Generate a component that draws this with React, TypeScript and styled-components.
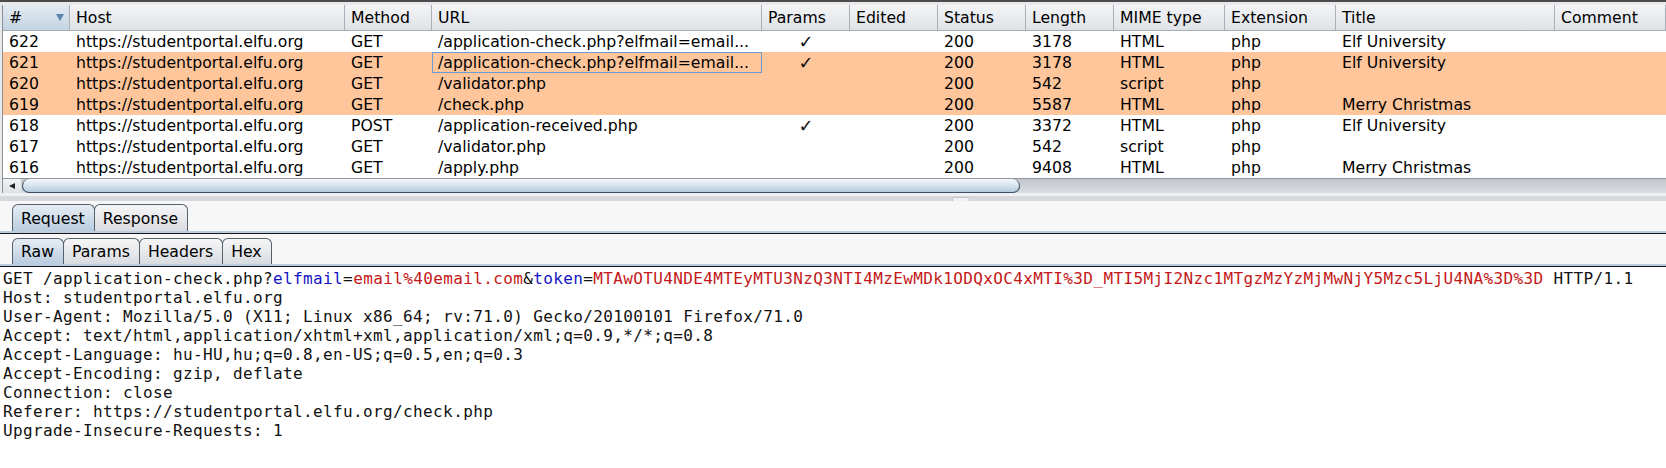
import React from 'react';
import styled, { createGlobalStyle } from 'styled-components';

const Global = createGlobalStyle`
  html, body { margin: 0; padding: 0; background: #f7f7f7; }
  body {
    width: 1666px;
    height: 468px;
    overflow: hidden;
    font-family: "DejaVu Sans", "Liberation Sans", sans-serif;
    color: #000;
  }
`;

const COLS = '67px 275px 87px 330px 88px 88px 88px 88px 111px 111px 219px 111px';

const Page = styled.div`
  display: flex;
  flex-direction: column;
  height: 468px;
  background: #f7f7f7;
`;

const TablePane = styled.div`
  border-top: 2px solid #4b4b4b;
  padding-top: 3px;
  background: #e8e9eb;
`;

const TableFrame = styled.div`
  margin-left: 2px;
  border-left: 1px solid #8c9096;
  background: #fff;
`;

const HeaderRow = styled.div`
  display: grid;
  grid-template-columns: ${COLS};
  height: 26px;
  border-bottom: 1px solid #a6acb3;
  box-sizing: border-box;
`;

const HeaderCell = styled.div<{ $sorted?: boolean }>`
  display: flex;
  align-items: center;
  justify-content: space-between;
  padding: 0 6px;
  font-size: 15.7px;
  border-right: 1px solid #aab0b8;
  background: ${(p) =>
    p.$sorted
      ? 'linear-gradient(#e4ebf2, #c3d3e3)'
      : 'linear-gradient(#f3f4f6, #dfe2e6)'};
  white-space: nowrap;
  overflow: hidden;
`;

const SortArrow = styled.span`
  width: 0;
  height: 0;
  border-left: 4px solid transparent;
  border-right: 4px solid transparent;
  border-top: 7px solid #5d84ad;
  margin-right: -1px;
`;

const Row = styled.div<{ $hl?: boolean }>`
  display: grid;
  grid-template-columns: ${COLS};
  height: 21px;
  background: ${(p) => (p.$hl ? '#ffc59b' : '#ffffff')};
`;

const Cell = styled.div<{ $center?: boolean; $focus?: boolean }>`
  padding: 0 ${(p) => (p.$focus ? '5px' : '6px')};
  font-size: 15.7px;
  line-height: ${(p) => (p.$focus ? '19px' : '21px')};
  white-space: nowrap;
  overflow: hidden;
  text-align: ${(p) => (p.$center ? 'center' : 'left')};
  border: ${(p) => (p.$focus ? '1px solid #6f9bd0' : 'none')};
`;

const Check = styled.span`
  font-size: 18px;
  font-weight: bold;
  color: #111;
`;

const ScrollBar = styled.div`
  display: flex;
  height: 15px;
  background: linear-gradient(#c3c7cd, #d9dce1);
  border-top: 1px solid #8f959c;
  box-sizing: border-box;
`;

const ArrowBtn = styled.div`
  width: 18px;
  display: flex;
  align-items: center;
  justify-content: center;
  background: linear-gradient(#f2f4f6, #dde1e5);
`;

const ArrowLeft = styled.span`
  width: 0;
  height: 0;
  border-top: 3px solid transparent;
  border-bottom: 3px solid transparent;
  border-right: 6px solid #222;
`;

const Thumb = styled.div`
  width: 998px;
  box-sizing: border-box;
  margin-left: 1px;
  border: 1px solid #3c4e62;
  border-top: none;
  border-radius: 8px;
  background: linear-gradient(#f4f7fa, #dbe6f0 45%, #b4c9dd);
`;

const Divider = styled.div`
  height: 10px;
  display: flex;
  flex-direction: column;
`;

const DividerTop = styled.div`
  height: 3px;
  background: #eff0f2;
`;

const DividerBand = styled.div`
  height: 5px;
  background: #d5d9de;
  display: flex;
`;

const Gripper = styled.div`
  margin-left: 952px;
  margin-top: 1px;
  width: 16px;
  height: 3px;
  background: #eef0f2;
  border: 1px solid #c2c7cd;
  border-bottom: none;
  border-radius: 2px 2px 0 0;
`;

const StripWrap = styled.div<{ $top: number }>`
  margin-top: ${(p) => p.$top}px;
  border-bottom: 1px solid #161616;
`;

const TabStrip = styled.div`
  display: flex;
  align-items: flex-end;
  padding-left: 12px;
  border-bottom: 2px solid #bccde0;
`;

const Tab = styled.div<{ $active?: boolean; $h: number }>`
  height: ${(p) => p.$h}px;
  box-sizing: border-box;
  display: flex;
  align-items: center;
  padding: 0 9px 0 8px;
  margin-right: -1px;
  font-size: 15.7px;
  border: 1px solid #56606b;
  border-bottom: none;
  border-radius: 6px 6px 0 0;
  background: ${(p) =>
    p.$active
      ? 'linear-gradient(#e6edf4, #b9cce0)'
      : 'linear-gradient(#f6f6f7, #d8dbe0)'};
`;

const TextArea = styled.div`
  flex: 1;
  background: #fff;
  padding: 2px 3px 0;
  font-family: "DejaVu Sans Mono", "Liberation Mono", monospace;
  font-size: 16px;
  letter-spacing: 0.37px;
  line-height: 19px;
  white-space: pre;
  color: #111;
`;

const Line = styled.div``;

const PName = styled.span`
  color: #1414c4;
`;

const PValue = styled.span`
  color: #c41818;
`;

type RowData = {
  id: string;
  method: string;
  url: string;
  params: boolean;
  length: string;
  mime: string;
  title: string;
  hl?: boolean;
  focus?: boolean;
};

const rows: RowData[] = [
  { id: '622', method: 'GET', url: '/application-check.php?elfmail=email...', params: true, length: '3178', mime: 'HTML', title: 'Elf University' },
  { id: '621', method: 'GET', url: '/application-check.php?elfmail=email...', params: true, length: '3178', mime: 'HTML', title: 'Elf University', hl: true, focus: true },
  { id: '620', method: 'GET', url: '/validator.php', params: false, length: '542', mime: 'script', title: '', hl: true },
  { id: '619', method: 'GET', url: '/check.php', params: false, length: '5587', mime: 'HTML', title: 'Merry Christmas', hl: true },
  { id: '618', method: 'POST', url: '/application-received.php', params: true, length: '3372', mime: 'HTML', title: 'Elf University' },
  { id: '617', method: 'GET', url: '/validator.php', params: false, length: '542', mime: 'script', title: '' },
  { id: '616', method: 'GET', url: '/apply.php', params: false, length: '9408', mime: 'HTML', title: 'Merry Christmas' },
];

const headers = ['Host', 'Method', 'URL', 'Params', 'Edited', 'Status', 'Length', 'MIME type', 'Extension', 'Title', 'Comment'];

export default function App() {
  return (
    <Page>
      <Global />
      <TablePane>
        <TableFrame>
          <HeaderRow>
            <HeaderCell $sorted>
              <span>#</span>
              <SortArrow />
            </HeaderCell>
            {headers.map((h) => (
              <HeaderCell key={h}>{h}</HeaderCell>
            ))}
          </HeaderRow>
          {rows.map((r) => (
            <Row key={r.id} $hl={r.hl}>
              <Cell>{r.id}</Cell>
              <Cell>https://studentportal.elfu.org</Cell>
              <Cell>{r.method}</Cell>
              <Cell $focus={r.focus}>{r.url}</Cell>
              <Cell $center>{r.params ? <Check>✓</Check> : ''}</Cell>
              <Cell></Cell>
              <Cell>200</Cell>
              <Cell>{r.length}</Cell>
              <Cell>{r.mime}</Cell>
              <Cell>php</Cell>
              <Cell>{r.title}</Cell>
              <Cell></Cell>
            </Row>
          ))}
          <ScrollBar>
            <ArrowBtn>
              <ArrowLeft />
            </ArrowBtn>
            <Thumb />
          </ScrollBar>
        </TableFrame>
      </TablePane>
      <Divider>
        <DividerTop />
        <DividerBand>
          <Gripper />
        </DividerBand>
      </Divider>
      <StripWrap $top={1}>
        <TabStrip>
          <Tab $active $h={27}>Request</Tab>
          <Tab $h={27}>Response</Tab>
        </TabStrip>
      </StripWrap>
      <StripWrap $top={4}>
        <TabStrip>
          <Tab $active $h={26}>Raw</Tab>
          <Tab $h={26}>Params</Tab>
          <Tab $h={26}>Headers</Tab>
          <Tab $h={26}>Hex</Tab>
        </TabStrip>
      </StripWrap>
      <TextArea>
        <Line>
          GET /application-check.php?<PName>elfmail</PName>=<PValue>email%40email.com</PValue>&amp;<PName>token</PName>=
          <PValue>MTAwOTU4NDE4MTEyMTU3NzQ3NTI4MzEwMDk1ODQxOC4xMTI%3D_MTI5MjI2Nzc1MTgzMzYzMjMwNjY5Mzc5LjU4NA%3D%3D</PValue> HTTP/1.1
        </Line>
        <Line>Host: studentportal.elfu.org</Line>
        <Line>User-Agent: Mozilla/5.0 (X11; Linux x86_64; rv:71.0) Gecko/20100101 Firefox/71.0</Line>
        <Line>Accept: text/html,application/xhtml+xml,application/xml;q=0.9,*/*;q=0.8</Line>
        <Line>Accept-Language: hu-HU,hu;q=0.8,en-US;q=0.5,en;q=0.3</Line>
        <Line>Accept-Encoding: gzip, deflate</Line>
        <Line>Connection: close</Line>
        <Line>Referer: https://studentportal.elfu.org/check.php</Line>
        <Line>Upgrade-Insecure-Requests: 1</Line>
      </TextArea>
    </Page>
  );
}
